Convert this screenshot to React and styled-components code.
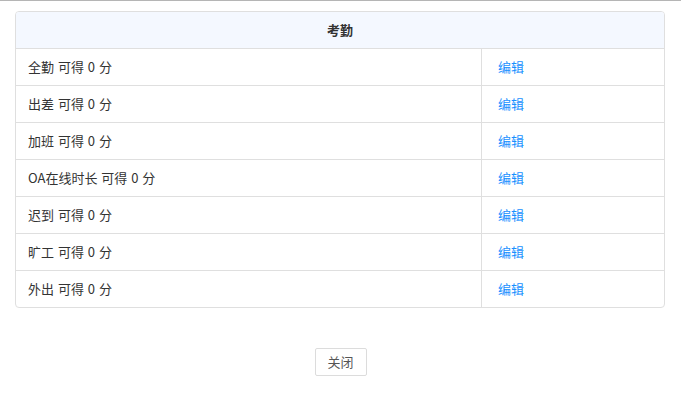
import React from "react";
import styled, { createGlobalStyle } from "styled-components";

const Global = createGlobalStyle`
  html, body { margin: 0; padding: 0; background: #fff; }
  body { font-family: "Noto Sans CJK SC", "Noto Sans", sans-serif; color: #333; }
`;

const Page = styled.div`
  border-top: 1px solid #b5b5b5;
  padding: 10px 16px 0 15px;
  display: flex;
  flex-direction: column;
  align-items: stretch;
`;

const Card = styled.div`
  border: 1px solid #dfdfdf;
  border-radius: 4px;
  overflow: hidden;
`;

const Header = styled.div`
  height: 37px;
  box-sizing: border-box;
  padding-bottom: 2px;
  background: #f4f8ff;
  border-bottom: 1px solid #dfdfdf;
  display: flex;
  align-items: center;
  justify-content: center;
  font-size: 13px;
  font-weight: 700;
  color: #333;
`;

const Row = styled.div`
  display: grid;
  grid-template-columns: 465px 1fr;
  height: ${(p) => (p.$last ? "36px" : "37px")};
  box-sizing: border-box;
  border-bottom: ${(p) => (p.$last ? "none" : "1px solid #dfdfdf")};
`;

const Cell = styled.div`
  display: flex;
  align-items: center;
  padding-left: ${(p) => (p.$action ? "16px" : "12px")};
  padding-bottom: 2px;
  font-size: 13px;
  word-spacing: 1px;
  color: #333;
  border-left: ${(p) => (p.$action ? "1px solid #dfdfdf" : "none")};
`;

const Link = styled.a`
  color: #1890ff;
  font-size: 13px;
  cursor: pointer;
  text-decoration: none;
`;

const Footer = styled.div`
  display: flex;
  justify-content: center;
  margin-top: 40px;
`;

const Button = styled.button`
  width: 52px;
  height: 28px;
  background: #fff;
  border: 1px solid #dcdcdc;
  border-radius: 2px;
  font-family: inherit;
  font-size: 13px;
  color: #555;
  padding: 0 0 2px;
  cursor: pointer;
  margin-left: 1px;
`;

const items = ["全勤", "出差", "加班", "OA在线时长", "迟到", "旷工", "外出"];

export default function App() {
  return (
    <>
      <Global />
      <Page>
        <Card>
          <Header>考勤</Header>
          {items.map((name, i) => {
            const last = i === items.length - 1;
            return (
              <Row key={name} $last={last}>
                <Cell>{name} 可得 0 分</Cell>
                <Cell $action>
                  <Link>编辑</Link>
                </Cell>
              </Row>
            );
          })}
        </Card>
        <Footer>
          <Button>关闭</Button>
        </Footer>
      </Page>
    </>
  );
}
